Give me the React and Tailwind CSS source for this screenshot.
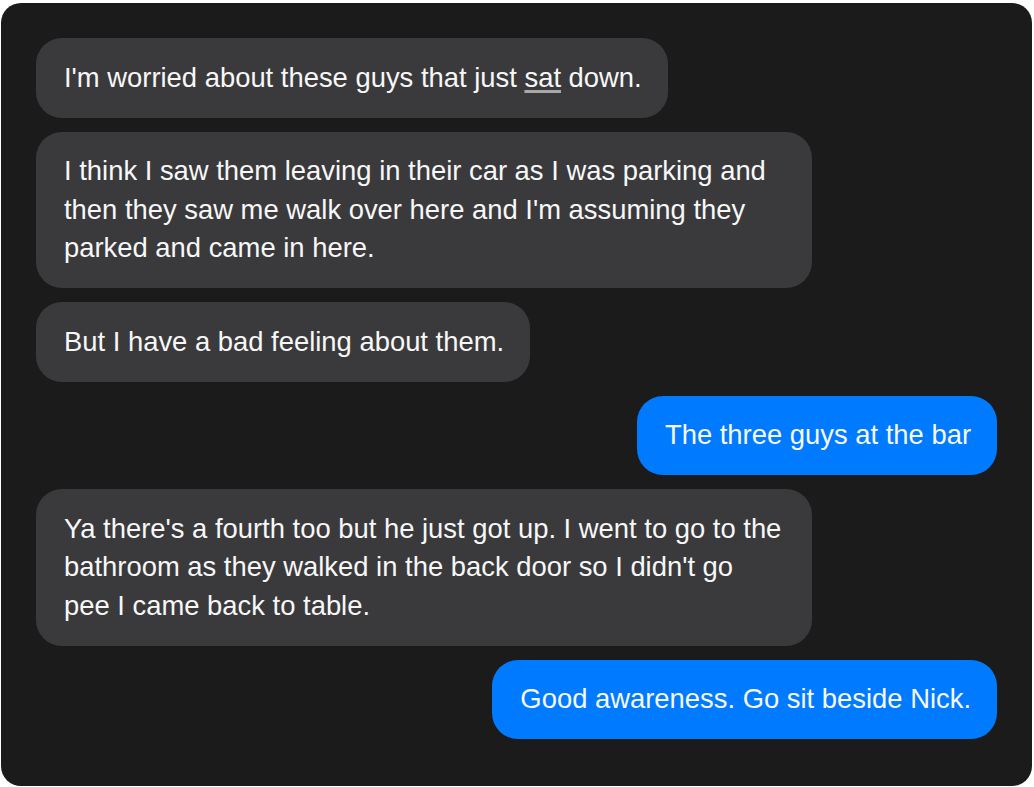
const messages = [
  { from: 'them', text: <>I'm worried about these guys that just <span className="underline decoration-[#a8a8a8] decoration-[2.5px] underline-offset-[3px]">sat</span> down.</> },
  { from: 'them', text: "I think I saw them leaving in their car as I was parking and then they saw me walk over here and I'm assuming they parked and came in here." },
  { from: 'them', text: 'But I have a bad feeling about them.' },
  { from: 'me', text: 'The three guys at the bar' },
  { from: 'them', text: "Ya there's a fourth too but he just got up. I went to go to the bathroom as they walked in the back door so I didn't go pee I came back to table." },
  { from: 'me', text: 'Good awareness. Go sit beside Nick.' },
]

export default function App() {
  return (
    <div className="min-h-screen bg-white pt-[3px] pl-[1px] pr-[2px]" style={{ fontFamily: '"Liberation Sans", Arial, sans-serif' }}>
      <div className="h-[783px] rounded-[20px] bg-[#1b1b1b] px-[35px] pt-[35px] flex flex-col gap-[14px]">
        {messages.map((m, i) => (
          <div key={i} className={`flex ${m.from === 'me' ? 'justify-end' : 'justify-start'}`}>
            <div
              className={`max-w-[776px] rounded-[26px] pl-[28px] pr-[26px] py-[20.5px] text-[27.4px] leading-[38.5px] text-[#f7f7f7] ${
                m.from === 'me' ? 'bg-[#007aff]' : 'bg-[#3a3a3c]'
              }`}
            >
              {m.text}
            </div>
          </div>
        ))}
      </div>
    </div>
  )
}
